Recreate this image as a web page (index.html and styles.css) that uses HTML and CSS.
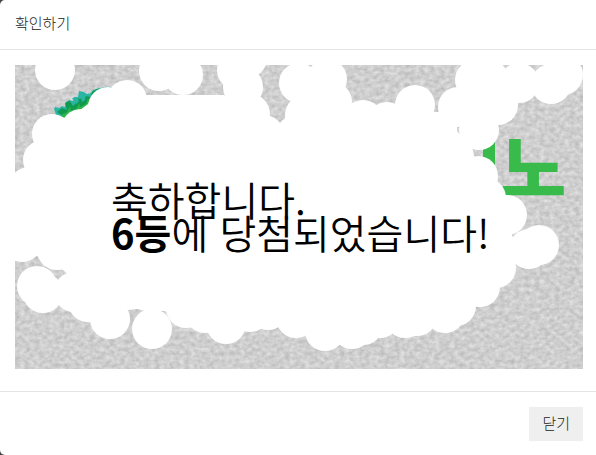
FILE: index.html
```html
<!DOCTYPE html>
<html lang="ko">
<head>
  <meta charset="UTF-8" />
  <meta name="viewport" content="width=device-width, initial-scale=1.0" />
  <title>확인하기</title>
  <link rel="stylesheet" href="styles.css">
</head>
<body>
  <div class="modal" role="dialog" aria-labelledby="modalTitle">
    <header class="modal-header">
      <h1 class="modal-title" id="modalTitle">확인하기</h1>
    </header>

    <main class="modal-body">
      <svg class="scratch" viewBox="15 65 568 304">
        <defs>
          <filter id="stone" x="0" y="0" width="100%" height="100%" color-interpolation-filters="sRGB">
            <feTurbulence type="fractalNoise" baseFrequency="0.2 0.25" numOctaves="2" seed="8" />
            <feColorMatrix values="0.22 0 0 0 0.7  0.22 0 0 0 0.7  0.22 0 0 0 0.7  0 0 0 0 1" />
          </filter>
        </defs>

        <!-- cover -->
        <rect x="15" y="65" width="568" height="304" filter="url(#stone)" />
        <g class="leaves">
          <path class="teal" d="M54 109l1-2 4 1 3-2 3 1 1-5 3-2 4 1 1-4 4 0 1-6 5 1 3 2 4-1 2-3 6-2 8-1 6 0-4 10-30 22-20 4z" />
          <path class="green" d="M57 112l5-4 5 2-2-7 5-2 3 5 4-4-2-4 5 1 5-3 6 1 1-5 5-3 6 0 0 12-25 14-12 3z" />
          <path class="teal" d="M72 98l5-1 2 4-3 3zM80 92l6 2-1 6-3 2z" />
          <path class="lime" d="M61 115l6-3 3-6 1 5 6-3 2-5 1 4 6-3 2-6 2 6-4 8-20 10z" />
        </g>
        <rect class="brand" x="483" y="138" width="12" height="58" />
        <text class="brand" x="500" y="195">노</text>

        <!-- scratched area -->
        <g class="scratched">
          <path d="M15 180L45 150 60 125 100 95H224L240 110 280 135 310 110 330 100 350 110 375 112 395 110 438 112H457V131L473 150 474 156 483 200 510 230 520 255 495 270 470 300 445 315 400 325 350 335 310 335 270 315 257 327 245 325 210 325 180 315 164 311 150 312 137 309 129 310 100 305 63 270 37 256 15 250z" />
          <circle cx="55" cy="70" r="20" />
          <circle cx="159" cy="71" r="20" />
          <circle cx="183" cy="75" r="20" />
          <circle cx="237" cy="70" r="20" />
          <circle cx="247" cy="58" r="20" />
          <circle cx="243" cy="87" r="20" />
          <circle cx="250" cy="114" r="20" />
          <circle cx="264" cy="135" r="20" />
          <circle cx="296" cy="135" r="20" />
          <circle cx="305" cy="115" r="20" />
          <circle cx="299" cy="83" r="20" />
          <circle cx="327" cy="79" r="20" />
          <circle cx="332" cy="102" r="20" />
          <circle cx="363" cy="120" r="20" />
          <circle cx="387" cy="122" r="20" />
          <circle cx="415" cy="105" r="20" />
          <circle cx="458" cy="107" r="20" />
          <circle cx="475" cy="80" r="20" />
          <circle cx="489" cy="80" r="20" />
          <circle cx="478" cy="104" r="20" />
          <circle cx="519" cy="83" r="20" />
          <circle cx="551" cy="84" r="20" />
          <circle cx="563" cy="75" r="20" />
          <circle cx="498" cy="105" r="20" />
          <circle cx="479" cy="130" r="20" />
          <circle cx="478" cy="176" r="20" />
          <circle cx="486" cy="198" r="20" />
          <circle cx="507" cy="215" r="20" />
          <circle cx="539" cy="245" r="20" />
          <circle cx="529" cy="249" r="20" />
          <circle cx="496" cy="268" r="20" />
          <circle cx="480" cy="287" r="20" />
          <circle cx="456" cy="306" r="20" />
          <circle cx="445" cy="313" r="20" />
          <circle cx="417" cy="316" r="20" />
          <circle cx="405" cy="318" r="20" />
          <circle cx="380" cy="318" r="20" />
          <circle cx="363" cy="325" r="20" />
          <circle cx="352" cy="329" r="20" />
          <circle cx="325" cy="331" r="20" />
          <circle cx="296" cy="318" r="20" />
          <circle cx="268" cy="310" r="20" />
          <circle cx="250" cy="312" r="20" />
          <circle cx="226" cy="324" r="20" />
          <circle cx="205" cy="313" r="20" />
          <circle cx="186" cy="308" r="20" />
          <circle cx="152" cy="329" r="20" />
          <circle cx="110" cy="319" r="20" />
          <circle cx="88" cy="302" r="20" />
          <circle cx="74" cy="292" r="20" />
          <circle cx="43" cy="293" r="20" />
          <circle cx="37" cy="286" r="20" />
          <circle cx="57" cy="250" r="20" />
          <circle cx="22" cy="242" r="20" />
          <circle cx="29" cy="187" r="20" />
          <circle cx="43" cy="160" r="20" />
          <circle cx="52" cy="134" r="20" />
          <circle cx="81" cy="129" r="20" />
          <circle cx="108" cy="107" r="20" />
          <circle cx="127" cy="100" r="20" />
        </g>

        <text class="result">
          <tspan x="111" y="216">축하합니다.</tspan>
          <tspan x="111" y="249" class="rank">6등</tspan><tspan>에 당첨되었습니다!</tspan>
        </text>
      </svg>
    </main>

    <footer class="modal-footer">
      <button type="button" class="close-button">닫기</button>
    </footer>
  </div>
</body>
</html>
```
FILE: styles.css
```css
* {
  margin: 0;
  padding: 0;
  box-sizing: border-box;
}

body {
  font-family: 'Noto Sans CJK KR', sans-serif;
  font-size: 15px;
  color: #222222;
  background: #444444;
}

.modal {
  background: #ffffff;
  border-radius: 5px 0 0 5px;
}

.modal-header {
  padding: 13px 15px 16px;
  border-bottom: 1px solid #e5e5e5;
}

.modal-title {
  font-size: 15px;
  font-weight: 300;
  line-height: 20px;
}

.modal-body {
  padding: 15px 13px 22px 15px;
}

.scratch {
  display: block;
  width: 100%;
  height: auto;
}

.teal {
  fill: #2bb5a5;
}

.green {
  fill: #0f9a50;
}

.lime {
  fill: #2fb34a;
}

.brand {
  fill: #39bb4c;
  font-size: 72px;
  font-weight: 900;
}

.scratched {
  fill: #ffffff;
}

.result {
  fill: #000000;
  font-size: 40px;
  font-weight: 350;
}

.rank {
  font-weight: 700;
}

.modal-footer {
  display: flex;
  justify-content: flex-end;
  padding: 15px 13px 14px;
  border-top: 1px solid #e5e5e5;
}

.close-button {
  padding: 6px 13px 8px;
  font-family: inherit;
  font-size: 15px;
  font-weight: 300;
  line-height: 20px;
  color: #222222;
  background: #efefef;
  border: none;
  cursor: pointer;
}

.close-button:hover {
  background: #e2e2e2;
}
```
